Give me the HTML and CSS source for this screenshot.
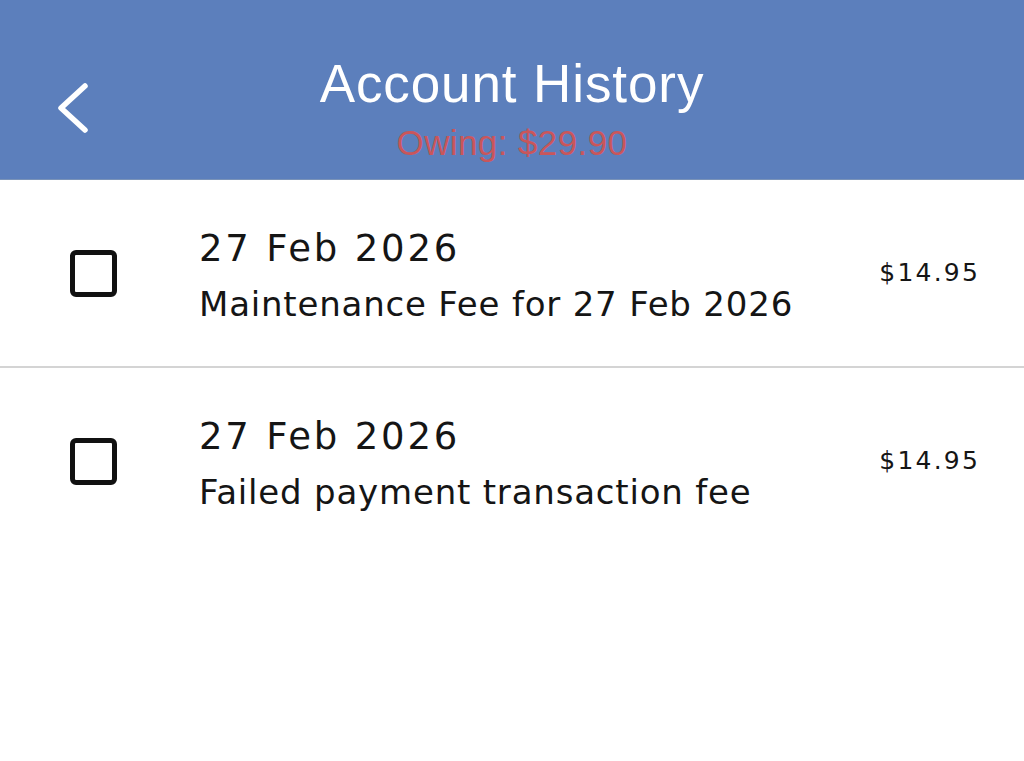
FILE: index.html
```html
<!DOCTYPE html>
<html lang="en">
<head>
<meta charset="utf-8">
<title>Account History</title>
<link rel="stylesheet" href="styles.css">
</head>
<body>
<header class="nav">
  <div class="nav-left">
    <svg class="back" width="40" height="60" viewBox="0 0 40 60" aria-label="Back">
      <path d="M32 8 L8 30 L32 52" fill="none" stroke="#ffffff" stroke-width="5.5" stroke-linecap="round" stroke-linejoin="round"/>
    </svg>
  </div>
  <div class="nav-title">
    <h1 class="title">Account History</h1>
    <div class="owing">Owing: $29.90</div>
  </div>
  <div class="nav-right"></div>
</header>
<main class="list">
  <div class="row divided">
    <span class="check"></span>
    <div class="info">
      <div class="date">27 Feb 2026</div>
      <div class="desc">Maintenance Fee for 27 Feb 2026</div>
    </div>
    <div class="amount">$14.95</div>
  </div>
  <div class="row">
    <span class="check"></span>
    <div class="info">
      <div class="date">27 Feb 2026</div>
      <div class="desc">Failed payment transaction fee</div>
    </div>
    <div class="amount">$14.95</div>
  </div>
</main>
</body>
</html>
```
FILE: styles.css
```css
html, body {
  margin: 0;
  padding: 0;
  background: #ffffff;
}
body {
  width: 1024px;
  height: 761px;
  overflow: hidden;
  font-family: "DejaVu Sans", "Liberation Sans", sans-serif;
  color: #151515;
}
.nav {
  box-sizing: border-box;
  height: 180px;
  padding-top: 54px;
  background: #5c7fbc;
  border-bottom: 1px solid #7a93b8;
  display: grid;
  grid-template-columns: 1fr auto 1fr;
  align-items: start;
}
.nav-left {
  padding-left: 53px;
  padding-top: 24px;
}
.back {
  display: block;
}
.nav-title {
  display: flex;
  flex-direction: column;
  align-items: center;
}
.title {
  margin: 0;
  font-family: "Liberation Sans", Arial, sans-serif;
  font-weight: normal;
  font-size: 53px;
  line-height: 60px;
  color: #ffffff;
  letter-spacing: 0.9px;
}
.owing {
  margin-top: 9px;
  font-family: "Liberation Sans", Arial, sans-serif;
  font-size: 35px;
  line-height: 40px;
  color: #c9565b;
  letter-spacing: 0.4px;
}
.list {
  display: flex;
  flex-direction: column;
}
.row {
  height: 186px;
  display: flex;
  align-items: center;
  padding: 0 46px 0 70px;
}
.row.divided {
  border-bottom: 2px solid #d4d4d4;
}
.check {
  box-sizing: border-box;
  width: 47px;
  height: 47px;
  border: 5px solid #111111;
  border-radius: 6px;
  flex: none;
}
.info {
  margin-left: 82px;
  padding-top: 5px;
  flex: 1;
  display: flex;
  flex-direction: column;
  gap: 13px;
}
.date {
  font-size: 37px;
  line-height: 44px;
  letter-spacing: 2.8px;
}
.desc {
  font-size: 34px;
  line-height: 40px;
  letter-spacing: 0.8px;
}
.amount {
  font-size: 25px;
  line-height: 30px;
  letter-spacing: 2.2px;
  margin-right: -2px;
}
```
